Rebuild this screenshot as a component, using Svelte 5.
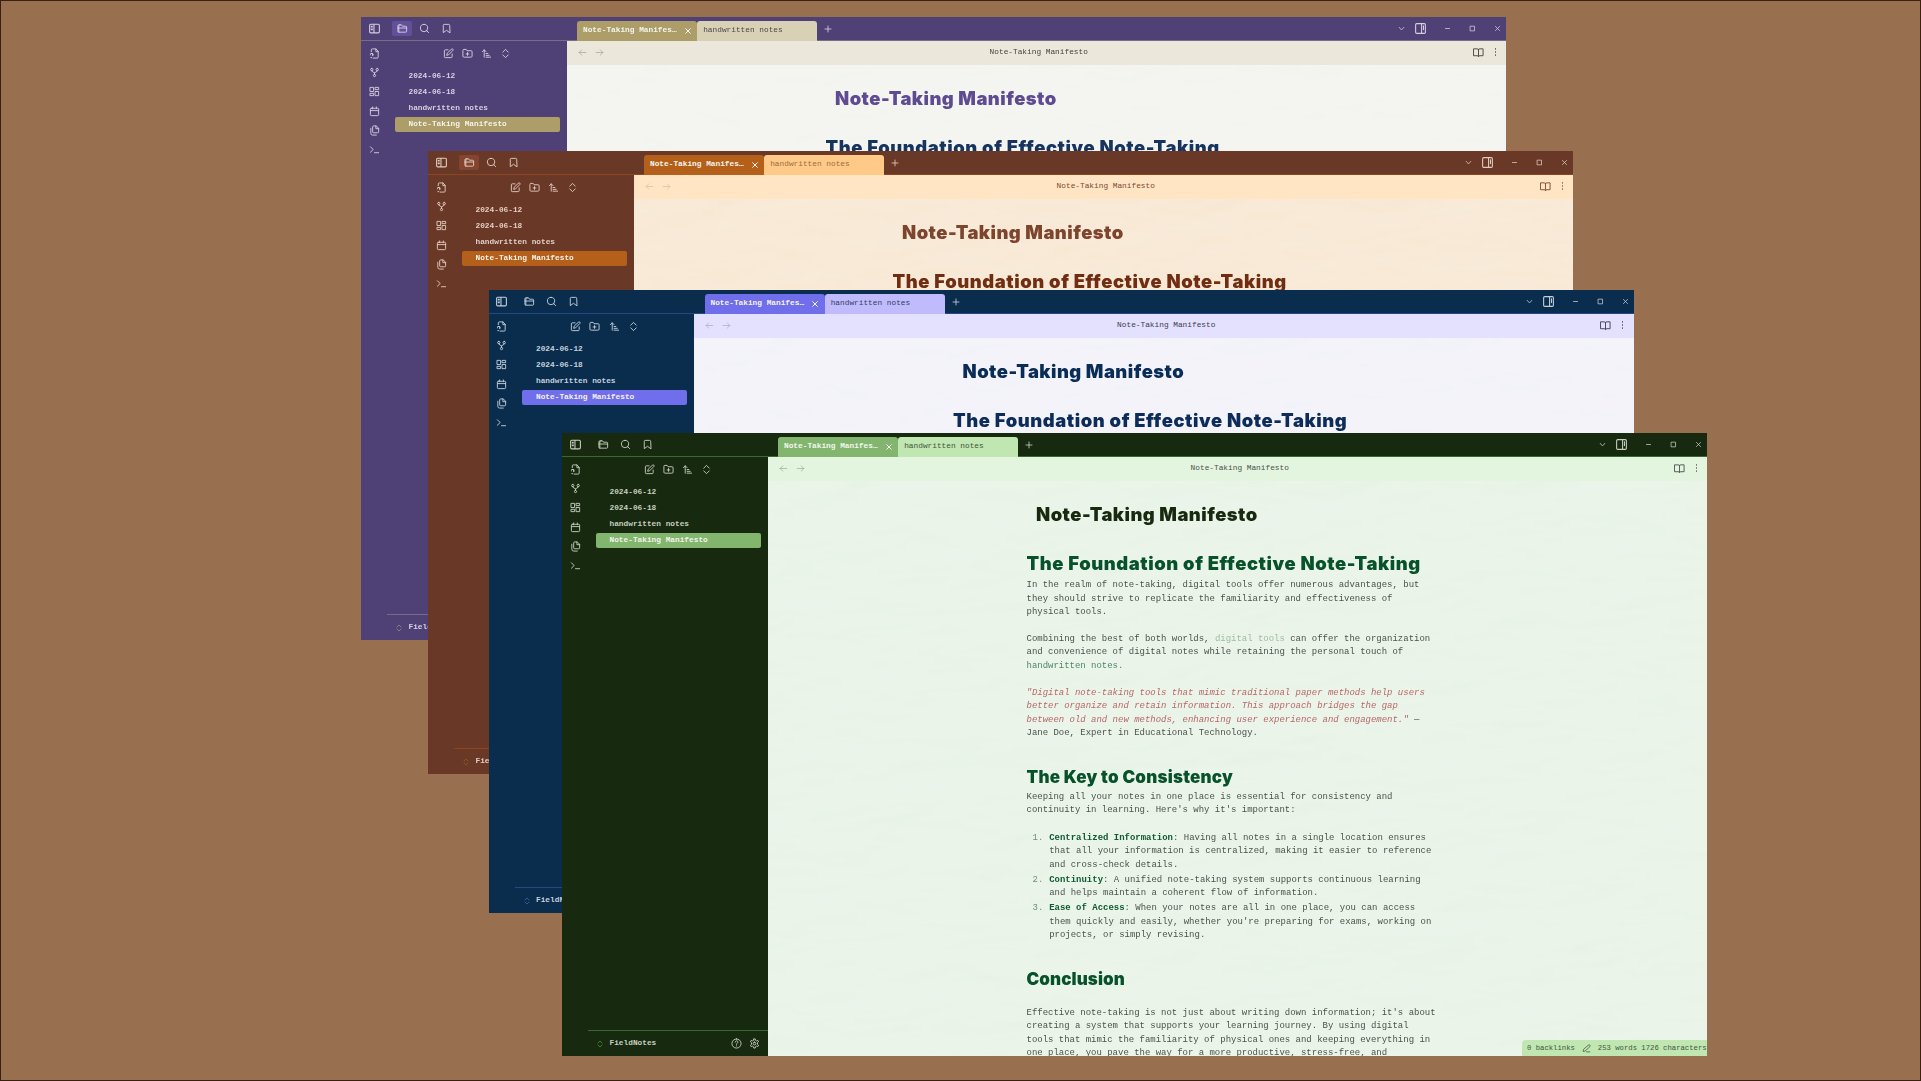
<script>
  const windows = [
    { name: 'purple', lit: true },
    { name: 'rust', lit: true },
    { name: 'navy', lit: false },
    { name: 'forest', lit: false, front: true }
  ];
  const files = ['2024-06-12', '2024-06-18', 'handwritten notes', 'Note-Taking Manifesto'];
  const ribbon = ['file', 'graph', 'canvas', 'calendar', 'copy', 'terminal'];
  const tools = ['edit', 'newfolder', 'sort', 'chevrons'];

  // 24-unit line icons
  const icons = {
    panel: 'M5 4h14a2 2 0 0 1 2 2v12a2 2 0 0 1-2 2H5a2 2 0 0 1-2-2V6a2 2 0 0 1 2-2zM11 4v16M6 8h2M6 11h2M6 14h2',
    panelRight: 'M5 3h14a2 2 0 0 1 2 2v14a2 2 0 0 1-2 2H5a2 2 0 0 1-2-2V5a2 2 0 0 1 2-2zM14 3v18M17.500 7v7',
    folder: 'M4 20V6a2 2 0 0 1 2-2h4l2 3h7a2 2 0 0 1 2 2v9a2 2 0 0 1-2 2H4a2 2 0 0 1-2-2V6a2 2 0 0 1 2-2h3M2 11h19',
    search: 'M11 3a8 8 0 1 0 0 16 8 8 0 0 0 0-16zM21 21l-4.300-4.300',
    bookmark: 'M19 21l-7-5-7 5V5a2 2 0 0 1 2-2h10a2 2 0 0 1 2 2z',
    file: 'M5 8V4a2 2 0 0 1 2-2h8l5 5v13a2 2 0 0 1-2 2H9M15 2v6h5M3 15a3 3 0 1 1 5 2M4 12h4v4M4 21h2',
    graph: 'M6 3a2.500 2.500 0 1 0 0 5 2.500 2.500 0 0 0 0-5zM18 3a2.500 2.500 0 1 0 0 5 2.500 2.500 0 0 0 0-5zM12 16a2.500 2.500 0 1 0 0 5 2.500 2.500 0 0 0 0-5zM6 8v1l6 4 6-4V8M12 13v3',
    canvas: 'M3 3h7v9H3zM14 3h7v5h-7zM14 12h7v9h-7zM3 16h7v5H3z',
    calendar: 'M5 5h14a2 2 0 0 1 2 2v12a2 2 0 0 1-2 2H5a2 2 0 0 1-2-2V7a2 2 0 0 1 2-2zM3 10h18M8 2v4M16 2v4',
    copy: 'M15 2H10a2 2 0 0 0-2 2v11a2 2 0 0 0 2 2h9a2 2 0 0 0 2-2V8zM15 2v6h6M4 7v11a4 4 0 0 0 4 4h8',
    terminal: 'M3 18l6-6-6-6M12 19h9',
    edit: 'M11 4H5a2 2 0 0 0-2 2v13a2 2 0 0 0 2 2h13a2 2 0 0 0 2-2v-6M18.500 2.500a2.100 2.100 0 0 1 3 3L12 15l-4 1 1-4z',
    newfolder: 'M4 20a2 2 0 0 1-2-2V5a2 2 0 0 1 2-2h5l2 3h9a2 2 0 0 1 2 2v10a2 2 0 0 1-2 2zM12 10v6M9 13h6',
    sort: 'M7 20V4M3 8l4-4 4 4M11 12h4M11 16h7M11 20h10',
    chevrons: 'M6 15l6 6 6-6M6 9l6-6 6 6',
    close: 'M5 5l14 14M19 5L5 19',
    plus: 'M12 3v18M3 12h18',
    down: 'M4 8l8 9 8-9',
    minus: 'M5 12h14',
    square: 'M5 4h14v16H5z',
    left: 'M21 12H3M10 5l-7 7 7 7',
    right: 'M3 12h18M14 5l7 7-7 7',
    book: 'M12 5v15M2 4h7a3 3 0 0 1 3 2 3 3 0 0 1 3-2h7v15h-7a3 3 0 0 0-3 2 3 3 0 0 0-3-2H2z',
    dots: 'M12 3v1.500M12 11.200v1.500M12 19.500v1.500',
    help: 'M12 2a10 10 0 1 0 0 20 10 10 0 0 0 0-20zM9 9a3 3 0 1 1 4.500 2.600c-1 .6-1.500 1-1.500 2.400M12 17v.5',
    gear: 'M10.500 2h3l.6 3 2.400 1.400 2.900-1 1.500 2.600-2.300 2v4l2.300 2-1.500 2.600-2.900-1-2.400 1.400-.6 3h-3l-.6-3-2.400-1.400-2.900 1L3.100 16l2.300-2v-4L3.100 8l1.500-2.600 2.900 1L9.900 5zM12 9a3 3 0 1 0 0 6 3 3 0 0 0 0-6z',
    pencil: 'M17 3a2.800 2.800 0 0 1 4 4L8 19l-5 1 1-5zM12 21h9'
  };
</script>

{#snippet icon(name, cls = '')}
  <svg class="icon {cls}" viewBox="0 0 24 24"><path d={icons[name]} /></svg>
{/snippet}

<div class="desktop">
  {#each windows as w (w.name)}
    <section class="window {w.name}">
      <header class="titlebar">
        <div class="left-tools">
          <span class="slot">{@render icon('panel', 'big')}</span>
          <span class="slot" class:lit={w.lit}>{@render icon('folder')}</span>
          <span class="slot">{@render icon('search')}</span>
          <span class="slot">{@render icon('bookmark')}</span>
        </div>
        <div class="tab active"><span>Note-Taking Manifes…</span>{@render icon('close', 'x')}</div>
        <div class="tab"><span>handwritten notes</span></div>
        {@render icon('plus', 'add')}
        <div class="controls">
          {@render icon('down', 'tiny')}
          {@render icon('panelRight', 'big')}
          {@render icon('minus', 'tiny')}
          {@render icon('square', 'tiny')}
          {@render icon('close', 'tiny')}
        </div>
      </header>

      <div class="body">
        <nav class="ribbon">
          {#each ribbon as r}{@render icon(r)}{/each}
        </nav>
        <aside class="sidebar">
          <div class="tools">
            {#each tools as t}{@render icon(t)}{/each}
          </div>
          <ul class="files">
            {#each files as f, i}<li class:selected={i === 3}>{f}</li>{/each}
          </ul>
          <footer class="vault">
            {@render icon('chevrons', 'switch')}
            <span class="vault-name">FieldNotes</span>
            {#if w.front}
              {@render icon('help')}
              {@render icon('gear')}
            {/if}
          </footer>
        </aside>

        <main class="pane">
          <!-- faint paper fibres -->
          <svg class="grain" aria-hidden="true">
            <filter id="grain-{w.name}" x="0" y="0" width="100%" height="100%" color-interpolation-filters="sRGB">
              <feTurbulence type="fractalNoise" baseFrequency="0.012 0.03" numOctaves="3" seed="4" />
              <feDiffuseLighting lighting-color="#fff" surfaceScale="7"><feDistantLight azimuth="60" elevation="30" /></feDiffuseLighting>
            </filter>
            <rect width="100%" height="100%" filter="url(#grain-{w.name})" />
          </svg>
          <div class="view-header">
            <div class="arrows">{@render icon('left')}{@render icon('right')}</div>
            <span class="view-title">Note-Taking Manifesto</span>
            <div class="view-actions">{@render icon('book')}{@render icon('dots')}</div>
          </div>
          <article class="doc">
            <h1 class="doc-title">Note-Taking Manifesto</h1>
            <h2 class="foundation">The Foundation of Effective Note-Taking</h2>
            {#if w.front}
              <p>In the realm of note-taking, digital tools offer numerous advantages, but<br />they should strive to replicate the familiarity and effectiveness of<br />physical tools.</p>
              <p>Combining the best of both worlds, <span class="link">digital tools</span> can offer the organization<br />and convenience of digital notes while retaining the personal touch of<br /><span class="internal">handwritten notes.</span></p>
              <p><em>"Digital note-taking tools that mimic traditional paper methods help users<br />better organize and retain information. This approach bridges the gap<br />between old and new methods, enhancing user experience and engagement."</em> —<br />Jane Doe, Expert in Educational Technology.</p>
              <h2 class="key">The Key to Consistency</h2>
              <p>Keeping all your notes in one place is essential for consistency and<br />continuity in learning. Here's why it's important:</p>
              <ol>
                <li><span class="num">1.</span><div><b>Centralized Information</b>: Having all notes in a single location ensures<br />that all your information is centralized, making it easier to reference<br />and cross-check details.</div></li>
                <li><span class="num">2.</span><div><b>Continuity</b>: A unified note-taking system supports continuous learning<br />and helps maintain a coherent flow of information.</div></li>
                <li><span class="num">3.</span><div><b>Ease of Access</b>: When your notes are all in one place, you can access<br />them quickly and easily, whether you're preparing for exams, working on<br />projects, or simply revising.</div></li>
              </ol>
              <h2 class="conclusion">Conclusion</h2>
              <p>Effective note-taking is not just about writing down information; it's about<br />creating a system that supports your learning journey. By using digital<br />tools that mimic the familiarity of physical ones and keeping everything in<br />one place, you pave the way for a more productive, stress-free, and</p>
            {/if}
          </article>
        </main>
      </div>
      {#if w.front}
        <div class="status"><span>0 backlinks</span>{@render icon('pencil')}<span>253 words 1726 characters</span></div>
      {/if}
    </section>
  {/each}
</div>

<style>
  :global(body) { margin: 0; }
  .desktop {
    position: relative;
    box-sizing: border-box;
    width: 1921px;
    height: 1081px;
    overflow: hidden;
    background: #99704f;
    border: 1px solid #3a2012;
  }
  .window {
    position: absolute;
    display: flex;
    flex-direction: column;
    width: 1145px;
    height: 623px;
    overflow: hidden;
    background: var(--side);
    color: var(--text);
    font: 8.98px/13.45px 'Liberation Mono', monospace;
    white-space: nowrap;
  }
  .purple {
    left: 360px; top: 16px;
    --side: #4f4176; --line: #7a6c84; --fg: #d5cfe0; --accent: #ad9d68; --tab2: #d9d1b6; --tab2fg: #4b4848;
    --bar: #ece7db; --paper: #f4f5f1; --text: #444; --title: #5e4b92; --head: #17345f; --muted: #aaa69e; --lit: #62519a; --switch: #a99a82;
  }
  .rust {
    left: 427px; top: 150px;
    --side: #693827; --line: #8b4520; --fg: #e2cdc0; --accent: #b5601a; --tab2: #ffca87; --tab2fg: #a16b43;
    --bar: #ffe5c4; --paper: #f8ead7; --text: #7d4a32; --title: #7d452e; --head: #702d12; --muted: #dcbd9c; --lit: #83452f; --switch: #a65c20;
  }
  .navy {
    left: 487.5px; top: 289px;
    --side: #0a2d4e; --line: #254886; --fg: #c3d0dc; --accent: #706eea; --tab2: #bfbbfd; --tab2fg: #383d61;
    --bar: #e3e1fd; --paper: #f3f3f9; --text: #3c4050; --title: #0a2d57; --head: #0d2c5a; --muted: #acabc1; --lit: transparent; --switch: #5864bd;
  }
  .forest {
    left: 561px; top: 432px;
    --side: #17290f; --line: #376b2c; --fg: #c6cec0; --accent: #82b56e; --tab2: #c0e6b2; --tab2fg: #3f5739;
    --bar: #e3f4df; --paper: #eaf4e9; --text: #4b534c; --title: #17290f; --head: #07522b; --muted: #a2afa0; --lit: transparent; --switch: #58a04c;
  }
  .icon {
    display: block;
    flex: none;
    width: 11px;
    height: 11px;
    fill: none;
    stroke: currentColor;
    stroke-width: 2;
    stroke-linecap: round;
    stroke-linejoin: round;
  }
  .icon.big { width: 13px; height: 13px; }
  .icon.tiny { width: 7px; height: 7px; stroke-width: 2.6; }

  .titlebar {
    display: flex;
    align-items: flex-end;
    box-sizing: border-box;
    height: 24px;
    flex: none;
    border-bottom: 1px solid var(--line);
    color: var(--fg);
  }
  .left-tools { display: flex; align-items: center; width: 216px; height: 23px; box-sizing: border-box; padding-left: 3px; }
  .slot { display: grid; place-items: center; width: 20px; height: 15px; margin-right: 2px; border-radius: 2px; }
  .slot:first-child { margin-right: 8px; }
  .slot.lit { background: var(--lit); }
  .tab {
    display: flex;
    align-items: center;
    justify-content: space-between;
    box-sizing: border-box;
    width: 120.2px;
    height: 20px;
    margin-bottom: -1px;
    padding: 0 5.5px 1px 6px;
    border-radius: 3px 3px 0 0;
    background: var(--tab2);
    color: var(--tab2fg);
    font-size: 7.8px;
  }
  .tab.active { background: var(--accent); color: #f5f5ee; font-weight: bold; }
  .icon.x { width: 8px; height: 8px; stroke-width: 3; }
  .icon.add { width: 8px; height: 8px; margin: 0 0 7px 7px; stroke-width: 2.5; }
  .controls { display: flex; align-items: center; height: 23px; margin-left: auto; padding-right: 5px; }
  .controls .icon:nth-child(2) { margin: 0 17px 0 9px; }
  .controls .icon:nth-child(3) { margin-right: 18px; }
  .controls .icon:nth-child(4) { margin-right: 18px; }

  .body { display: flex; flex: 1; min-height: 0; }
  .ribbon { display: flex; flex-direction: column; align-items: center; gap: 8.2px; width: 26px; padding-top: 7px; color: var(--fg); }
  .sidebar { display: flex; flex-direction: column; width: 179.5px; color: var(--fg); }
  .tools { display: flex; gap: 8.3px; padding: 7px 0 0 55.5px; }
  .files { margin: 9px 0 0; padding: 0 7px 0 7.5px; list-style: none; font-size: 7.8px; font-weight: bold; }
  .files li { box-sizing: border-box; height: 15px; line-height: 15px; margin-bottom: 1.3px; padding: 0.6px 0 0 14px; border-radius: 2px; }
  .files .selected { background: var(--accent); color: #f3f3ea; }
  .vault {
    display: flex;
    align-items: center;
    height: 25px;
    margin-top: auto;
    padding-right: 8px;
    padding-left: 8px;
    border-top: 1px solid var(--line);
    font-size: 7.8px;
    font-weight: bold;
  }
  .vault-name { margin: 0 auto 0 5.5px; }
  .vault .icon:last-child { margin-left: 7px; }
  .icon.switch { width: 8px; height: 8px; color: var(--switch); }

  .pane { position: relative; flex: 1; min-width: 0; background: var(--paper); overflow: hidden; }
  .grain { position: absolute; inset: 0; width: 100%; height: 100%; opacity: 0.11; mix-blend-mode: soft-light; }
  .view-header {
    position: relative;
    display: flex;
    align-items: center;
    justify-content: space-between;
    box-sizing: border-box;
    height: 24px;
    padding: 0 6px 1.5px 11px;
    background: var(--bar);
    font-size: 7.8px;
  }
  .arrows { display: flex; gap: 8px; width: 70px; color: var(--muted); }
  .arrows .icon { width: 9px; height: 9px; }
  .view-actions { display: flex; align-items: center; justify-content: flex-end; gap: 7px; width: 70px; }
  .view-actions .icon:last-child { width: 9px; height: 10px; stroke-width: 2.6; }

  .doc { position: relative; padding-left: 259px; }
  h1, h2 {
    margin: 0;
    font: 900 18.4px/24px Inter, sans-serif;
    letter-spacing: 0.58px;
    color: var(--head);
  }
  .doc-title { padding: 21px 0 0 9.500px; color: var(--title); letter-spacing: 0.48px; }
  .foundation { margin: 25px 0 4.2px; }
  .key { margin: 24.3px 0 2px; font-size: 17px; letter-spacing: 0.22px; }
  .conclusion { margin: 22.7px 0 15.8px; font-size: 17px; letter-spacing: 0.1px; }
  p { margin: 0 0 13.45px; }
  .link { color: #9dbda2; }
  .internal { color: #4e8765; }
  em { color: #b96668; }
  b { color: #0f5a30; }
  ol { margin: 0; padding: 0.4px 0 0; list-style: none; }
  ol li { display: flex; padding-bottom: 1.7px; }
  .num { box-sizing: border-box; width: 22.7px; padding-left: 6px; color: #6d8f78; }

  .status {
    position: absolute;
    right: 0;
    bottom: 0;
    display: flex;
    align-items: center;
    gap: 7px;
    box-sizing: border-box;
    width: 185px;
    height: 16px;
    padding: 1px 0 0 5px;
    border-radius: 4px 0 0 0;
    background: var(--tab2);
    color: var(--tab2fg);
    font-size: 7.25px;
  }
  .status .icon { width: 9px; height: 9px; }
</style>
